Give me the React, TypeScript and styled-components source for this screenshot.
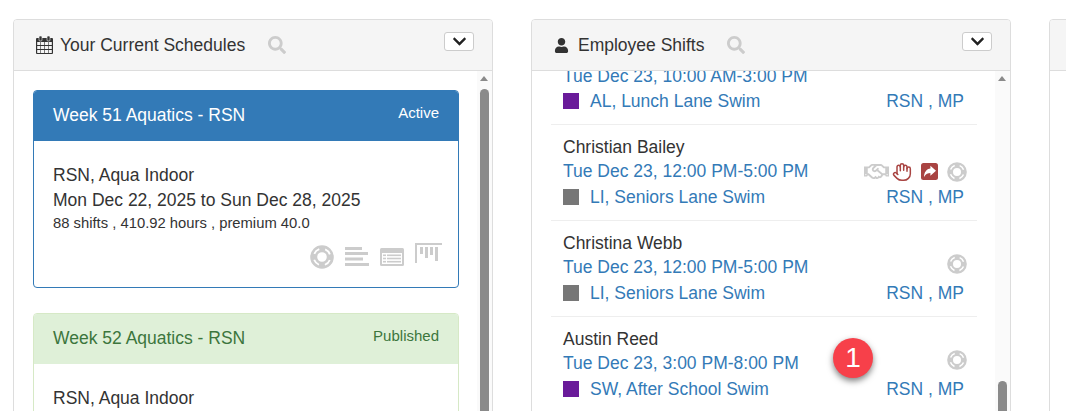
import React from "react";
import styled, { createGlobalStyle } from "styled-components";
import { FaRegHandshake, FaSearch, FaChevronDown, FaUser } from "react-icons/fa";
import { Hand } from "lucide-react";

const Global = createGlobalStyle`
  html, body { margin: 0; padding: 0; background: #fff; }
  body { font-family: "Liberation Sans", Arial, sans-serif; color: #333; overflow: hidden; }
`;

const Page = styled.div`
  position: relative;
  width: 1066px;
  height: 411px;
  overflow: hidden;
  display: flex;
  gap: 38px;
  padding: 19px 0 0 13px;
  box-sizing: border-box;
`;

const Panel = styled.section`
  flex: 0 0 480px;
  height: 440px;
  box-sizing: border-box;
  border: 1px solid #ddd;
  border-radius: 4px;
  background: #fff;
  overflow: hidden;
  display: flex;
  flex-direction: column;
`;

const PanelHeader = styled.header`
  flex: 0 0 51px;
  box-sizing: border-box;
  background: #f5f5f5;
  border-bottom: 1px solid #ddd;
  display: flex;
  align-items: center;
  padding: 0 18px 0 22px;
  font-size: 17.5px;
  color: #333;
`;

const HeaderIcon = styled.span`
  display: inline-flex;
  width: 17px;
  margin-right: 7px;
  color: #333;
  font-size: 15px;
`;

const SearchIcon = styled.span`
  display: inline-flex;
  margin-left: 23px;
  color: #ccc;
  font-size: 18px;
`;

const Toggle = styled.button`
  margin-left: auto;
  margin-top: -7px;
  width: 30px;
  height: 19px;
  padding: 0;
  box-sizing: border-box;
  background: #fff;
  border: 1px solid #ccc;
  border-radius: 3px;
  display: flex;
  align-items: center;
  justify-content: center;
  color: #222;
  font-size: 15px;
`;

const PanelBody = styled.div`
  flex: 1;
  display: flex;
  min-height: 0;
  overflow: hidden;
`;

const ScrollContent = styled.div`
  flex: 1;
  min-width: 0;
  padding: 19px 0 0 19px;
`;

const Scrollbar = styled.div`
  flex: 0 0 15px;
  background: #fafafa;
  position: relative;
`;

const ScrollArrow = styled.div`
  position: absolute;
  left: 3px;
  top: 5px;
  width: 0;
  height: 0;
  border-left: 4.5px solid transparent;
  border-right: 4.5px solid transparent;
  border-bottom: 5px solid #8a8a8a;
`;

const ScrollThumb = styled.div<{ $top: number }>`
  position: absolute;
  left: 3px;
  top: ${(p) => p.$top}px;
  width: 9px;
  height: 400px;
  border-radius: 5px;
  background: #8a8a8a;
`;

const Card = styled.article<{ $border: string }>`
  box-sizing: border-box;
  width: 426px;
  border: 1px solid ${(p) => p.$border};
  border-radius: 4px;
  margin-bottom: 25px;
  background: #fff;
  overflow: hidden;
`;

const CardHeader = styled.div<{ $bg: string; $color: string }>`
  height: 50px;
  box-sizing: border-box;
  background: ${(p) => p.$bg};
  color: ${(p) => p.$color};
  display: flex;
  justify-content: space-between;
  padding: 14px 19px 0 19px;
`;

const CardTitle = styled.span`
  font-size: 17.5px;
  line-height: 20px;
`;

const CardStatus = styled.span`
  font-size: 15px;
  line-height: 16px;
`;

const CardBody = styled.div`
  padding: 22px 16px 0 19px;
  height: 146px;
  box-sizing: border-box;
`;

const BodyLine = styled.div`
  font-size: 17.5px;
  line-height: 25px;
  color: #333;
`;

const SmallLine = styled.div`
  font-size: 14.8px;
  line-height: 21px;
  color: #333;
`;

const CardActions = styled.div`
  margin-top: 9px;
  display: flex;
  justify-content: flex-end;
  align-items: flex-start;
  gap: 11px;
  color: #ccc;
`;

const ActionSlot = styled.span<{ $top: number }>`
  display: inline-flex;
  margin-top: ${(p) => p.$top}px;
`;

const ShiftViewport = styled.div`
  flex: 1;
  min-width: 0;
  padding: 0 18px 0 19px;
`;

const ShiftRow = styled.div`
  height: 96px;
  box-sizing: border-box;
  border-bottom: 1px solid #eee;
  padding: 11px 10px 0 12px;
`;

const Name = styled.div`
  font-size: 17.5px;
  line-height: 23px;
  color: #333;
`;

const TimeLine = styled.div`
  display: flex;
  align-items: center;
  justify-content: space-between;
  font-size: 17.5px;
  line-height: 25px;
  height: 25px;
  color: #337ab7;
`;

const FirstShiftRow = styled(ShiftRow)`
  height: 62px;
  padding-top: 0;
  margin-top: -8px;

  ${TimeLine} {
    height: 23px;
    padding-top: 2px;
  }
`;

const RoleLine = styled.div`
  display: flex;
  align-items: center;
  font-size: 17.5px;
  line-height: 26px;
  color: #337ab7;
`;

const Swatch = styled.span<{ $color: string }>`
  width: 16px;
  height: 16px;
  margin-right: 11px;
  background: ${(p) => p.$color};
`;

const Tags = styled.span`
  margin-left: auto;
  margin-right: 3px;
`;

const RowIcons = styled.div<{ $solo: boolean }>`
  display: flex;
  align-items: center;
  gap: 9px;
  margin-top: ${(p) => (p.$solo ? -7 : 0)}px;
`;

const RowIcon = styled.span<{ $color: string }>`
  display: inline-flex;
  color: ${(p) => p.$color};
`;

const ShakeIcon = styled(RowIcon)`
  margin-right: -6px;
`;

const Badge = styled.div`
  position: absolute;
  left: 833px;
  top: 338px;
  width: 40px;
  height: 40px;
  border-radius: 50%;
  background: #f7404a;
  color: #fff;
  font-size: 28px;
  display: flex;
  align-items: center;
  justify-content: center;
  box-shadow: 0 3px 6px rgba(0, 0, 0, 0.5);
`;

const CalendarIcon = () => (
  <svg width="17" height="18" viewBox="0 0 17 18">
    <rect x="0" y="2" width="17" height="16" rx="1" fill="#333" />
    <rect x="3" y="0" width="3" height="5" rx="1" fill="#333" stroke="#f5f5f5" strokeWidth="0.6" />
    <rect x="11" y="0" width="3" height="5" rx="1" fill="#333" stroke="#f5f5f5" strokeWidth="0.6" />
    <g fill="#f5f5f5">
      {[6, 10, 14].map((y) =>
        [1.2, 5, 8.8, 12.6].map((x) => <rect key={`${x}-${y}`} x={x} y={y} width="3.2" height="3" />)
      )}
    </g>
  </svg>
);

const RingIcon = ({ size }: { size: number }) => (
  <svg width={size} height={size} viewBox="0 0 24 24" fill="none">
    <circle cx="12" cy="12" r="8.3" stroke="currentColor" strokeWidth="7" />
    <circle cx="12" cy="12" r="8.3" stroke="#fff" strokeWidth="1.8" strokeDasharray="7 6.04" strokeDashoffset="-3" />
  </svg>
);

const ShareIcon = () => (
  <svg width="17" height="17" viewBox="0 0 17 17">
    <rect width="17" height="17" rx="2.5" fill="currentColor" />
    <path d="M9.4 2.8 15 7.8 9.4 12.8V9.9C7 9.9 4.8 10.8 3 14 3.1 9.4 5.6 6 9.4 5.6Z" fill="#fff" />
  </svg>
);

const BarsIcon = () => (
  <svg width="24" height="19" viewBox="0 0 24 19" fill="currentColor">
    <rect x="0" y="0" width="17" height="3" />
    <rect x="0" y="5" width="23" height="3" />
    <rect x="0" y="10.5" width="18" height="3" />
    <rect x="0" y="16" width="24" height="3" />
  </svg>
);

const ListIcon = () => (
  <svg width="24" height="18" viewBox="0 0 24 18">
    <rect x="0" y="0" width="24" height="18" rx="1.5" fill="currentColor" />
    <rect x="2" y="5" width="20" height="11" fill="#fff" />
    <g fill="#ccc">
      <rect x="3" y="6.5" width="3" height="1.6" />
      <rect x="7" y="6.5" width="14" height="1.6" />
      <rect x="3" y="9.7" width="3" height="1.6" />
      <rect x="7" y="9.7" width="14" height="1.6" />
      <rect x="3" y="12.9" width="3" height="1.6" />
      <rect x="7" y="12.9" width="14" height="1.6" />
    </g>
  </svg>
);

const BoardIcon = () => (
  <svg width="27" height="21" viewBox="0 0 27 21" fill="currentColor">
    <rect x="0" y="0" width="27" height="2" />
    <rect x="0" y="0" width="2" height="20" />
    <rect x="5" y="4" width="3" height="7" />
    <rect x="10" y="4" width="3" height="11" />
    <rect x="15" y="4" width="3" height="8" />
    <rect x="20" y="4" width="3" height="14" />
  </svg>
);

type Sched = { title: string; status: string; bg: string; color: string; border: string };

const schedules: Sched[] = [
  { title: "Week 51 Aquatics - RSN", status: "Active", bg: "#337ab7", color: "#fff", border: "#337ab7" },
  { title: "Week 52 Aquatics - RSN", status: "Published", bg: "#dff0d8", color: "#3c763d", border: "#d6e9c6" },
];

type Shift = { name: string; time: string; role: string; swatch: string; full?: boolean };

const shifts: Shift[] = [
  { name: "Christian Bailey", time: "Tue Dec 23, 12:00 PM-5:00 PM", role: "LI, Seniors Lane Swim", swatch: "#777", full: true },
  { name: "Christina Webb", time: "Tue Dec 23, 12:00 PM-5:00 PM", role: "LI, Seniors Lane Swim", swatch: "#777" },
  { name: "Austin Reed", time: "Tue Dec 23, 3:00 PM-8:00 PM", role: "SW, After School Swim", swatch: "#6a1b9a" },
];

export default function App() {
  return (
    <Page>
      <Global />
      <Panel>
        <PanelHeader>
          <HeaderIcon><CalendarIcon /></HeaderIcon>
          Your Current Schedules
          <SearchIcon><FaSearch /></SearchIcon>
          <Toggle><FaChevronDown /></Toggle>
        </PanelHeader>
        <PanelBody>
          <ScrollContent>
            {schedules.map((s) => (
              <Card key={s.title} $border={s.border}>
                <CardHeader $bg={s.bg} $color={s.color}>
                  <CardTitle>{s.title}</CardTitle>
                  <CardStatus>{s.status}</CardStatus>
                </CardHeader>
                <CardBody>
                  <BodyLine>RSN, Aqua Indoor</BodyLine>
                  <BodyLine>Mon Dec 22, 2025 to Sun Dec 28, 2025</BodyLine>
                  <SmallLine>88 shifts , 410.92 hours , premium 40.0</SmallLine>
                  <CardActions>
                    <ActionSlot $top={2}><RingIcon size={24} /></ActionSlot>
                    <ActionSlot $top={4}><BarsIcon /></ActionSlot>
                    <ActionSlot $top={5}><ListIcon /></ActionSlot>
                    <ActionSlot $top={0}><BoardIcon /></ActionSlot>
                  </CardActions>
                </CardBody>
              </Card>
            ))}
          </ScrollContent>
          <Scrollbar>
            <ScrollArrow />
            <ScrollThumb $top={18} />
          </Scrollbar>
        </PanelBody>
      </Panel>
      <Panel>
        <PanelHeader>
          <HeaderIcon><FaUser /></HeaderIcon>
          Employee Shifts
          <SearchIcon><FaSearch /></SearchIcon>
          <Toggle><FaChevronDown /></Toggle>
        </PanelHeader>
        <PanelBody>
          <ShiftViewport>
            <FirstShiftRow>
              <TimeLine>Tue Dec 23, 10:00 AM-3:00 PM</TimeLine>
              <RoleLine>
                <Swatch $color="#6a1b9a" />
                AL, Lunch Lane Swim
                <Tags>RSN , MP</Tags>
              </RoleLine>
            </FirstShiftRow>
            {shifts.map((s) => (
              <ShiftRow key={s.name}>
                <Name>{s.name}</Name>
                <TimeLine>
                  {s.time}
                  <RowIcons $solo={!s.full}>
                    {s.full && <ShakeIcon $color="#ccc"><FaRegHandshake size={25} /></ShakeIcon>}
                    {s.full && <RowIcon $color="#a94442"><Hand size={20} strokeWidth={1.8} /></RowIcon>}
                    {s.full && <RowIcon $color="#a94442"><ShareIcon /></RowIcon>}
                    <RowIcon $color="#ccc"><RingIcon size={20} /></RowIcon>
                  </RowIcons>
                </TimeLine>
                <RoleLine>
                  <Swatch $color={s.swatch} />
                  {s.role}
                  <Tags>RSN , MP</Tags>
                </RoleLine>
              </ShiftRow>
            ))}
          </ShiftViewport>
          <Scrollbar>
            <ScrollArrow />
            <ScrollThumb $top={310} />
          </Scrollbar>
        </PanelBody>
      </Panel>
      <Panel>
        <PanelHeader />
      </Panel>
      <Badge>1</Badge>
    </Page>
  );
}
